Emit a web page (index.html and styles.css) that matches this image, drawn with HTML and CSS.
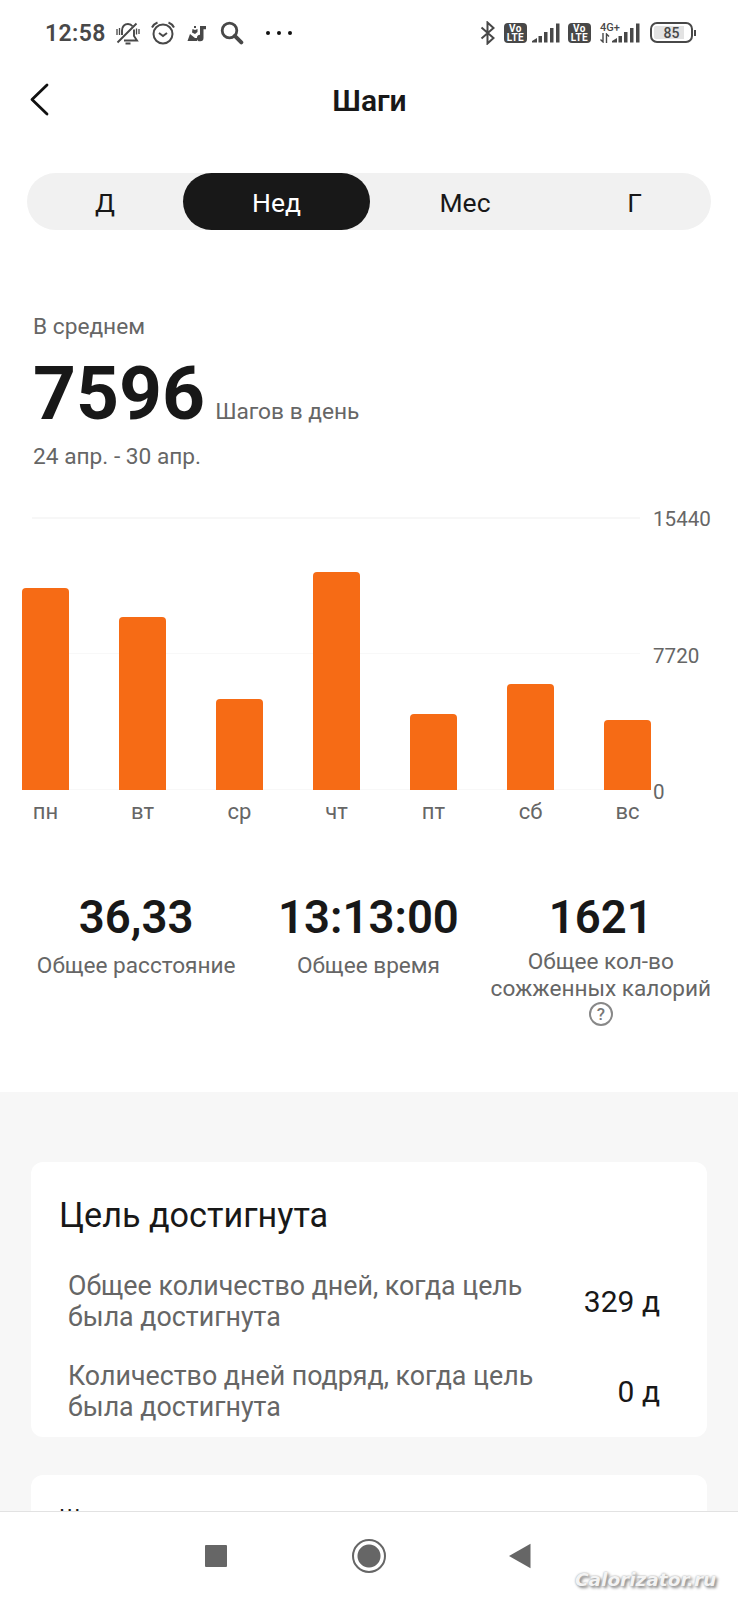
FILE: index.html
```html
<!DOCTYPE html>
<html lang="ru">
<head>
    <meta charset="UTF-8">
    <meta name="viewport" content="width=device-width, initial-scale=1.0">
    <title>Шаги</title>
    <link rel="stylesheet" href="styles.css">
</head>
<body>
    <div class="phone">
        <div class="status-bar">
            <span class="clock">12:58</span>
            <svg class="icon-bell" width="24" height="24" viewBox="0 0 24 24" fill="none" stroke="#484848" stroke-width="1.9">
                <path d="M6 14V9.5C6 5.500 8.500 3 12 3c2 0 3.500.8 4.500 2.200M18 8.500V15l3 4.500H8"/>
                <path d="M9.500 22.500h5M1.500 21.500L20.500 2.500"/>
                <path d="M1 8v6M3.500 7v7M20.500 7.500v6M23 8v5" stroke-width="1.3"/>
            </svg>
            <svg class="icon-alarm" width="24" height="24" viewBox="0 0 24 24" fill="none" stroke="#484848" stroke-width="2">
                <circle cx="12" cy="13" r="9.5"/>
                <path d="M1 6.500C2 4.500 4 2.500 6.500 1.500M23 6.500c-1-2-3-4-5.500-5M8 12l4 3 4-3"/>
            </svg>
            <svg class="icon-music" width="20" height="20" viewBox="0 0 20 20" fill="#484848">
                <path d="M.500 18l2.500-7 5 4h2v3zM5.500 6l2.500 1 2.500-1v3L8 11l-3-1.500zM7 3h2v2H7z"/>
                <path d="M13 3h6v3.200h-2.500V15a3.300 3.300 0 1 1-3.500-3.300z"/>
            </svg>
            <svg class="icon-search" width="24" height="24" viewBox="0 0 24 24" fill="none" stroke="#484848">
                <circle cx="9.5" cy="9.5" r="7.3" stroke-width="2.8"/>
                <path d="M14.800 14.800l6.500 6.500" stroke-width="4" stroke-linecap="round"/>
            </svg>
            <span class="dots"><i></i><i></i><i></i></span>
            <svg class="icon-bluetooth" width="16" height="24" viewBox="0 0 16 24" fill="none" stroke="#484848" stroke-width="2">
                <path d="M1.500 6.500l12 10.500-6 5.500v-21l6 5.500-12 10.500"/>
            </svg>
            <span class="volte"><b>Vo</b><b>LTE</b></span>
            <svg class="signal" width="28" height="20" viewBox="0 0 28 20" fill="#484848">
                <path d="M0 19.500V18l5-3v4.500zM6.500 13H10v6.500H6.500zM12 9h3.500v10.500H12zM18 5h3.500v14.500H18zM24 .500h3.500v19H24z"/>
            </svg>
            <span class="volte second"><b>Vo</b><b>LTE</b></span>
            <span class="network">
                <span>4G+</span>
                <svg width="10" height="10" viewBox="0 0 10 10" fill="none" stroke="#484848" stroke-width="1.4">
                    <path d="M3 0v9L.500 6.500M6.500 10V1L9 3.500"/>
                </svg>
            </span>
            <svg class="signal" width="28" height="20" viewBox="0 0 28 20" fill="#484848">
                <path d="M0 19.500V18l5-3v4.500zM6.500 13H10v6.500H6.500zM12 9h3.500v10.500H12zM18 5h3.500v14.500H18zM24 .500h3.500v19H24z"/>
            </svg>
            <span class="battery"><span>85</span></span>
            <span class="battery-tip"></span>
        </div>

        <div class="header">
            <svg class="back" width="20" height="34" viewBox="0 0 20 34" fill="none" stroke="#111" stroke-width="2.8" stroke-linecap="round" stroke-linejoin="round">
                <path d="M17 2L2 16.500 17 31"/>
            </svg>
            <h1>Шаги</h1>
        </div>

        <div class="tabs">
            <div class="tab day">Д</div>
            <div class="tab week active">Нед</div>
            <div class="tab month">Мес</div>
            <div class="tab year">Г</div>
        </div>

        <div class="average">
            <div class="caption">В среднем</div>
            <div class="total"><strong>7596</strong><span>Шагов в день</span></div>
            <div class="caption period">24 апр. - 30 апр.</div>
        </div>

        <div class="chart">
            <div class="plot">
                <div class="bar" style="height: 202px"></div>
                <div class="bar" style="height: 173px"></div>
                <div class="bar" style="height: 91px"></div>
                <div class="bar" style="height: 218px"></div>
                <div class="bar" style="height: 76px"></div>
                <div class="bar" style="height: 106px"></div>
                <div class="bar" style="height: 70px"></div>
            </div>
            <div class="scale">
                <span>15440</span>
                <span>7720</span>
                <span>0</span>
            </div>
        </div>
        <div class="days">
            <span>пн</span>
            <span>вт</span>
            <span>ср</span>
            <span>чт</span>
            <span>пт</span>
            <span>сб</span>
            <span>вс</span>
        </div>

        <div class="stats">
            <div class="stat">
                <div class="number">36,33</div>
                <div class="label">Общее расстояние</div>
            </div>
            <div class="stat">
                <div class="number">13:13:00</div>
                <div class="label">Общее время</div>
            </div>
            <div class="stat">
                <div class="number">1621</div>
                <div class="label calories">Общее кол-во<br>сожженных калорий</div>
                <div class="help">?</div>
            </div>
        </div>

        <div class="cards">
            <div class="card">
                <h2>Цель достигнута</h2>
                <div class="goal">
                    <p>Общее количество дней, когда цель<br>была достигнута</p>
                    <span>329 д</span>
                </div>
                <div class="goal">
                    <p>Количество дней подряд, когда цель<br>была достигнута</p>
                    <span>0 д</span>
                </div>
            </div>
            <div class="card next">
                <h2>Ш</h2>
            </div>
        </div>

        <div class="nav-bar">
            <span class="nav-square"></span>
            <span class="nav-circle"></span>
            <svg class="nav-back" width="22" height="26" viewBox="0 0 22 26" fill="#666">
                <path d="M0 13L21.500 .800v24.400z"/>
            </svg>
            <span class="watermark">Calorizator.ru</span>
        </div>
    </div>
</body>
</html>
```

FILE: styles.css
```css
* {
    box-sizing: border-box;
}
body {
    margin: 0;
    background-color: #fff;
    font-family: Roboto, sans-serif;
    color: #181818;
}
.phone {
    width: 738px;
    height: 1600px;
    display: flex;
    flex-direction: column;
    overflow: hidden;
}

/* status bar */
.status-bar {
    height: 64px;
    padding: 1px 0 0 45px;
    display: flex;
    align-items: center;
    color: #484848;
}
.status-bar svg {
    flex: none;
}
.clock {
    width: 71px;
    padding-top: 1px;
    font-size: 23px;
    font-weight: 600;
    letter-spacing: 0.4px;
}
.icon-alarm {
    margin-left: 11px;
}
.icon-music {
    margin-left: 12px;
}
.icon-search {
    margin-left: 13px;
}
.dots {
    width: 26px;
    margin-left: 22px;
    display: flex;
    justify-content: space-between;
}
.dots i {
    width: 4px;
    height: 4px;
    border-radius: 50%;
    background-color: #111;
}
.icon-bluetooth {
    margin-left: 188px;
}
.volte {
    width: 23px;
    height: 20px;
    margin: 0 5px 0 8px;
    padding-top: 1px;
    border-radius: 4px;
    background-color: #484848;
    color: #fff;
    font-size: 10px;
    line-height: 9px;
    letter-spacing: 0.4px;
    text-align: center;
}
.volte b {
    display: block;
}
.volte.second {
    margin: 0 9px 0 8px;
}
.network {
    width: 12px;
    height: 22px;
    font-size: 11px;
    font-weight: 500;
    line-height: 11px;
    white-space: nowrap;
}
.network span,
.network svg {
    display: block;
}
.battery {
    width: 43px;
    height: 21px;
    margin-left: 10px;
    padding: 2px;
    border: 2px solid #484848;
    border-radius: 7px;
}
.battery span {
    display: block;
    height: 13px;
    border-radius: 2px;
    background: linear-gradient(to right, #e3e3e3 85%, #fff 85%);
    font-size: 14px;
    font-weight: 500;
    line-height: 14px;
    text-align: center;
}
.battery-tip {
    width: 2px;
    height: 6px;
    margin-left: 1px;
    background-color: #484848;
}

/* header */
.header {
    height: 109px;
    padding: 19px 49px 0 30px;
    display: flex;
    align-items: flex-start;
}
.header h1 {
    flex: 1;
    margin: 0;
    font-size: 30px;
    font-weight: 600;
    line-height: 35px;
    text-align: center;
}

/* tabs */
.tabs {
    height: 57px;
    margin: 0 27px;
    display: flex;
    border-radius: 29px;
    background-color: #f1f1f1;
}
.tab {
    font-size: 26.5px;
    line-height: 60px;
    text-align: center;
}
.tab.day {
    width: 156px;
}
.tab.week {
    width: 187px;
}
.tab.month {
    width: 190px;
}
.tab.year {
    width: 149px;
}
.tab.active {
    border-radius: 29px;
    background-color: #181818;
    color: #fff;
}

/* average */
.average {
    height: 287px;
    padding: 84px 33px 0;
}
.caption {
    font-size: 22.7px;
    line-height: 26px;
    color: #666;
}
.total {
    height: 93px;
    line-height: 107px;
}
.total strong {
    font-size: 75px;
    font-weight: 700;
}
.total span {
    margin-left: 10px;
    font-size: 22.7px;
    color: #666;
}
.period {
    margin-top: 11px;
}

/* chart */
.chart {
    height: 273px;
    display: flex;
}
.plot {
    width: 653px;
    padding: 0 2px 0 22px;
    display: flex;
    align-items: flex-end;
    justify-content: space-between;
    background:
        linear-gradient(#f7f7f7, #f7f7f7) 32px 0 / 608px 2px no-repeat,
        linear-gradient(#f8f8f8, #f8f8f8) 32px 136px / 608px 1px no-repeat,
        linear-gradient(#f8f8f8, #f8f8f8) 32px 272px / 608px 1px no-repeat;
}
.bar {
    width: 47px;
    border-radius: 4px 4px 0 0;
    background-color: #f66b15;
}
.scale {
    height: 298px;
    margin-top: -10px;
    display: flex;
    flex-direction: column;
    justify-content: space-between;
    font-size: 20.6px;
    line-height: 25px;
    color: #666;
}
.days {
    height: 107px;
    padding: 9px 87px 0 22px;
    display: flex;
    justify-content: space-between;
    font-size: 22px;
    line-height: 26px;
    color: #666;
}
.days span {
    width: 47px;
    text-align: center;
}

/* stats */
.stats {
    height: 195px;
    padding: 0 21px 0 20px;
    display: flex;
}
.stat {
    flex: 1;
    text-align: center;
}
.number {
    font-size: 45.5px;
    font-weight: 600;
    line-height: 42px;
}
.label {
    margin-top: 14px;
    font-size: 22.6px;
    line-height: 26.6px;
    color: #666;
    white-space: nowrap;
}
.label.calories {
    margin-top: 10px;
}
.help {
    width: 24px;
    height: 24px;
    margin: 0 auto;
    border: 2px solid #888;
    border-radius: 50%;
    font-size: 17px;
    font-weight: 500;
    line-height: 21px;
    color: #777;
}

/* cards */
.cards {
    flex: 1;
    min-height: 0;
    padding: 70px 31px 0 31px;
    background-color: #f7f7f7;
    overflow: hidden;
}
.card {
    height: 275px;
    padding: 31px 47px 0 28px;
    border-radius: 12px;
    background-color: #fff;
}
.card.next {
    margin-top: 38px;
}
.card h2 {
    margin: 0 0 20px;
    font-size: 34.2px;
    font-weight: 400;
    line-height: 44px;
}
.card.next h2 {
    font-size: 22.6px;
    line-height: 24px;
}
.goal {
    height: 90px;
    padding-left: 9px;
    display: flex;
    align-items: center;
    justify-content: space-between;
}
.goal p {
    margin: 0;
    font-size: 26.8px;
    line-height: 31.5px;
    color: #666;
}
.goal span {
    padding-bottom: 2px;
    font-size: 30px;
}

/* navigation */
.nav-bar {
    height: 89px;
    padding: 0 15px 0 205px;
    display: flex;
    align-items: center;
    border-top: 1px solid #e2e2e2;
    background-color: #fff;
}
.nav-square {
    width: 22px;
    height: 22px;
    border-radius: 1px;
    background-color: #666;
}
.nav-circle {
    width: 34px;
    height: 34px;
    margin: 0 123px 0 125px;
    border: 2px solid #666;
    border-radius: 50%;
    background: radial-gradient(circle, #666 11px, #fff 12px);
}
.watermark {
    align-self: flex-end;
    margin: 0 0 10px 44px;
    font-family: "DejaVu Sans", sans-serif;
    font-size: 18.5px;
    font-style: italic;
    font-weight: 700;
    color: #f4f4f4;
    text-shadow: 0 0 2px #999, 2px 2px 3px #888;
}
```
